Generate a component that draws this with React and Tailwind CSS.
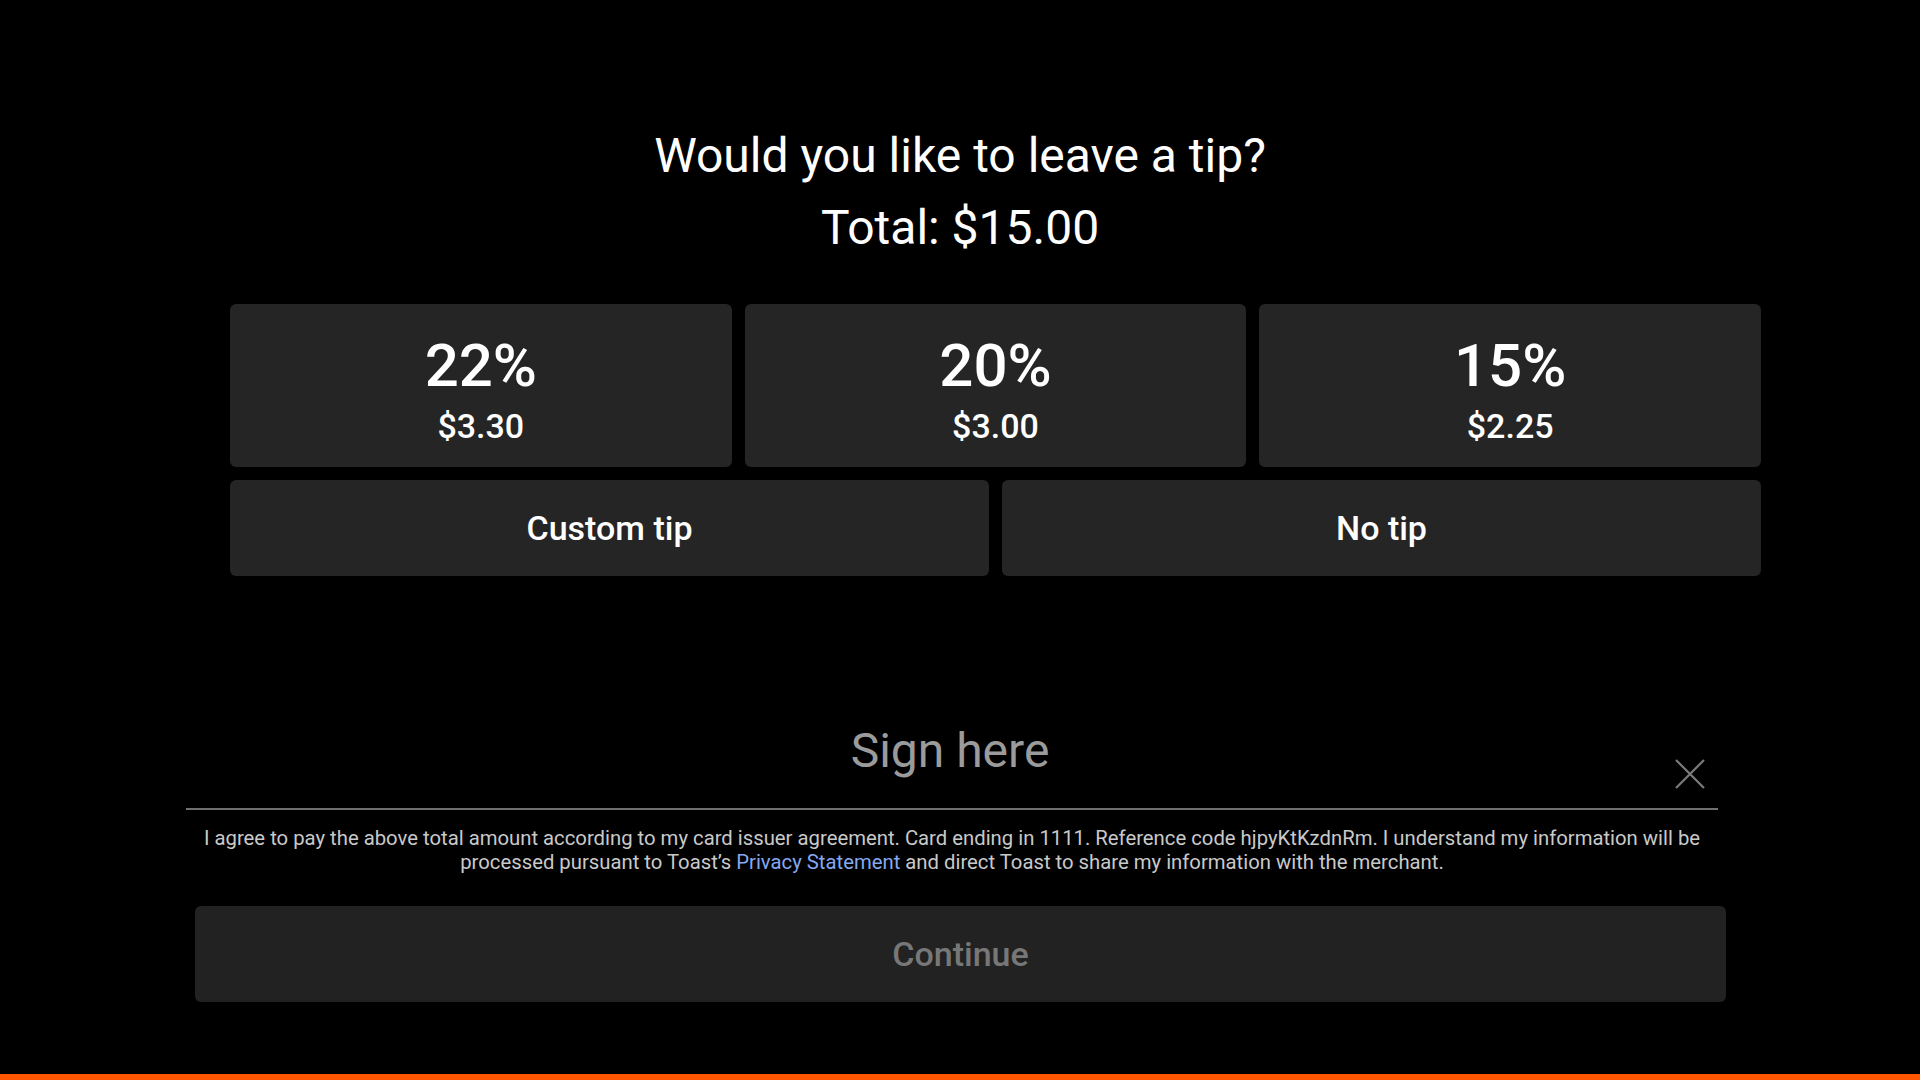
import React from "react";

function TipButton({ pct, amt }) {
  return (
    <button className="h-[163px] rounded-md bg-[#252525] flex flex-col items-center pt-[32px] text-white">
      <span className="text-[60px] leading-[60px] font-medium">{pct}</span>
      <span className="mt-[13px] text-[34px] leading-[34px] font-medium">{amt}</span>
    </button>
  );
}

export default function App() {
  return (
    <div className="w-[1920px] h-[1080px] bg-black flex flex-col font-['Roboto',sans-serif] overflow-hidden">
      <div className="pt-[120px] text-center text-white text-[48px] leading-[72px]">
        <div>Would you like to leave a tip?</div>
        <div>Total: $15.00</div>
      </div>

      <div className="mt-[40px] ml-[230px] w-[1531px] flex flex-col gap-[13px]">
        <div className="grid grid-cols-3 gap-[13px]">
          <TipButton pct="22%" amt="$3.30" />
          <TipButton pct="20%" amt="$3.00" />
          <TipButton pct="15%" amt="$2.25" />
        </div>
        <div className="grid grid-cols-2 gap-[13px]">
          <button className="h-[96px] rounded-md bg-[#252525] text-white text-[34px] leading-[34px] font-medium flex items-center justify-center">
            Custom tip
          </button>
          <button className="h-[96px] rounded-md bg-[#252525] text-white text-[34px] leading-[34px] font-medium flex items-center justify-center">
            No tip
          </button>
        </div>
      </div>

      <div className="relative ml-[186px] w-[1532px] h-[234px] border-b-2 border-[#6f6f6f] flex items-end justify-center pb-[33px]">
        <span className="-ml-[4px] text-[48px] leading-[48px] text-[#9b9b9b]">Sign here</span>
        <svg
          className="absolute right-[13px] bottom-[19px]"
          width="30"
          height="30"
          viewBox="0 0 30 30"
          fill="none"
          stroke="#7a7a7a"
          strokeWidth="2.2"
        >
          <path d="M1 1L29 29M29 1L1 29" />
        </svg>
      </div>

      <p className="ml-[186px] w-[1532px] mt-[16px] text-center text-[20.3px] leading-[24px] text-[#c9c9c9] whitespace-nowrap">
        I agree to pay the above total amount according to my card issuer agreement. Card ending in 1111. Reference code hjpyKtKzdnRm. I understand my information will be
        <br />
        processed pursuant to Toast’s <span className="text-[#86a8f2]">Privacy Statement</span> and direct Toast to share my information with the merchant.
      </p>

      <button className="mt-[32px] ml-[195px] w-[1531px] h-[96px] rounded-md bg-[#222222] text-[#777777] text-[34px] leading-[34px] font-medium flex items-center justify-center">
        Continue
      </button>

      <div className="mt-auto h-[6px] w-full bg-[#ff5500]" />
    </div>
  );
}
